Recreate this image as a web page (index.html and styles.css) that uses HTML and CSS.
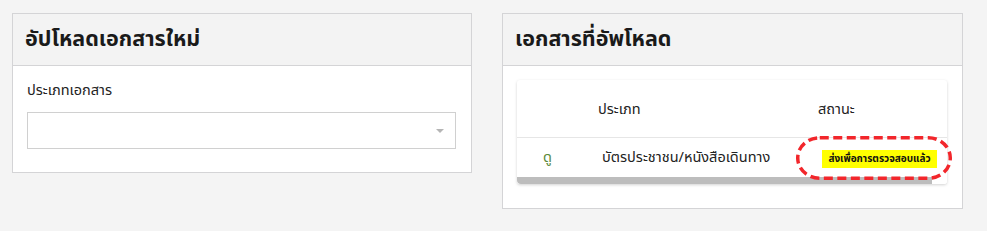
FILE: index.html
```html
<!DOCTYPE html>
<html lang="th">
<head>
<meta charset="utf-8">
<link rel="stylesheet" href="styles.css">
</head>
<body>
<div class="page">
  <section class="card card-upload">
    <header class="card-head"><h2>อัปโหลดเอกสารใหม่</h2></header>
    <div class="card-body">
      <label class="field-label">ประเภทเอกสาร</label>
      <div class="select"><span class="caret"></span></div>
    </div>
  </section>
  <section class="card card-list">
    <header class="card-head"><h2>เอกสารที่อัพโหลด</h2></header>
    <div class="card-body">
      <div class="table-card">
        <div class="row row-head">
          <div class="cell c1"></div>
          <div class="cell c2">ประเภท</div>
          <div class="cell c3">สถานะ</div>
        </div>
        <div class="row row-data">
          <div class="cell c1"><a class="view">ดู</a></div>
          <div class="cell c2 doc">บัตรประชาชน/หนังสือเดินทาง</div>
          <div class="cell c3"><span class="badge">ส่งเพื่อการตรวจสอบแล้ว</span></div>
          <svg class="mark" width="156" height="44" viewBox="0 0 156 44"><rect x="1.75" y="1.75" width="152.5" height="40.5" rx="22" ry="20" fill="none" stroke="#f2262b" stroke-width="3.5" stroke-dasharray="9 4.5"/></svg>
        </div>
        <div class="scroll"><div class="thumb"></div></div>
      </div>
    </div>
  </section>
</div>
</body>
</html>
```
FILE: styles.css
```css
html, body { margin: 0; padding: 0; }
body {
  background: #f4f4f4;
  font-family: Tahoma, "Noto Sans Thai", "Noto Sans", "DejaVu Sans", sans-serif;
  color: #222;
}
.page {
  display: flex;
  align-items: flex-start;
  gap: 30px;
  padding: 13px 0 0 12px;
}
.card {
  background: #fff;
  border: 1px solid #d4d4d6;
  box-sizing: border-box;
}
.card-upload { width: 460px; height: 160px; }
.card-list { width: 461px; height: 196px; }
.card-head {
  background: #f3f3f3;
  border-bottom: 1px solid #d4d4d6;
  height: 52px;
  display: flex;
  align-items: center;
  padding: 0 12px;
  box-sizing: border-box;
}
.card-head h2 {
  margin: 0;
  font-size: 21.5px;
  font-weight: bold;
  color: #1a1a1a;
  line-height: 26px;
}
.card-upload .card-body { padding: 15px 15px 0 14px; }
.field-label {
  display: block;
  font-size: 14.5px;
  line-height: 20px;
  color: #222;
}
.select {
  margin-top: 11px;
  height: 37px;
  border: 1px solid #d0d0d0;
  box-sizing: border-box;
  display: flex;
  align-items: center;
  justify-content: flex-end;
  padding-right: 11px;
}
.caret {
  width: 0; height: 0;
  border-left: 4px solid transparent;
  border-right: 4px solid transparent;
  border-top: 4px solid #b5b5b5;
}
.card-list .card-body { padding: 14px 15px 0 14px; }
.table-card {
  background: #fff;
  box-shadow: 0 1px 3px rgba(0,0,0,0.18);
  border-radius: 3px;
}
.row {
  display: grid;
  grid-template-columns: 81px 220px 1fr;
  align-items: center;
  font-size: 14.5px;
  color: #222;
}
.row-head { height: 58px; border-bottom: 1px solid #e6e6e6; box-sizing: border-box; padding-top: 2px; }
.row-data { height: 39px; position: relative; }
.c1 { padding-left: 26px; }
.row-data .c2 { padding-left: 4px; }
.row-data .c3 { padding-left: 4px; }
.view { color: #5a8a3a; text-decoration: none; font-size: 14.5px; }
.badge {
  display: inline-block;
  background: #ffff00;
  color: #111;
  font-size: 10px;
  font-weight: bold;
  padding: 0 4px;
  line-height: 18px;
  width: 115px;
  box-sizing: border-box;
  text-align: center;
}
.mark { position: absolute; left: 279px; top: -2px; }
.scroll { height: 7px; background: #fff; border-radius: 0 0 3px 3px; }
.thumb { width: 415px; height: 7px; background: #bdbdbd; border-radius: 0 0 0 4px; }
```
